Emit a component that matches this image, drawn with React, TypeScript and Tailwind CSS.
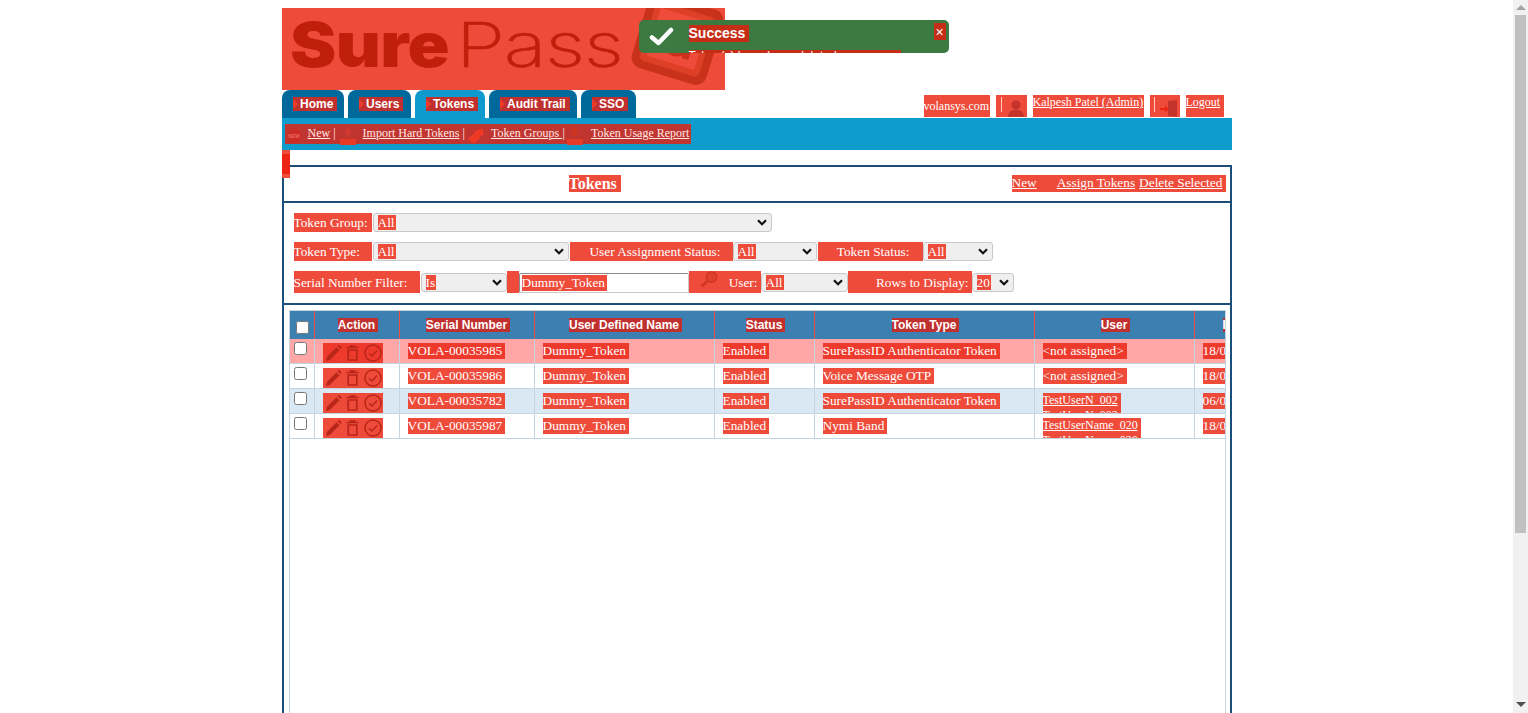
import type { ReactNode } from 'react';

const serif = 'font-["Liberation_Serif",serif]';

const tabs = [
  { name: 'Home', width: 'w-[62px]' },
  { name: 'Users', width: 'w-[63px]' },
  { name: 'Tokens', width: 'w-[70px]', active: true },
  { name: 'Audit Trail', width: 'w-[88px]' },
  { name: 'SSO', width: 'w-[55px]' },
];

const rows = [
  { serial: 'VOLA-00035985', type: 'SurePassID Authenticator Token', user: '<not assigned>', date: '18/09/2023', bg: 'bg-[#ffa6a6]', red: 'bg-[#ee3a2c]' },
  { serial: 'VOLA-00035986', type: 'Voice Message OTP', user: '<not assigned>', date: '18/09/2023', bg: 'bg-white', red: 'bg-[#ef4b3a]' },
  { serial: 'VOLA-00035782', type: 'SurePassID Authenticator Token', user: 'TestUserN_002', date: '06/09/2023', bg: 'bg-[#d9e8f3]', red: 'bg-[#ee4a3a]', link: true },
  { serial: 'VOLA-00035987', type: 'Nymi Band', user: 'TestUserName_020', date: '18/09/2023', bg: 'bg-white', red: 'bg-[#ef4b3a]', link: true },
];

const Chevron = () => (
  <svg width="10" height="7" viewBox="0 0 10 7" className="shrink-0">
    <path d="M1 1.2 5 5.2 9 1.2" fill="none" stroke="#111" strokeWidth="2.2" />
  </svg>
);

const Select = ({ value, className }: { value: string; className: string }) => (
  <div className={`flex h-[19px] items-center justify-between rounded-[3px] border border-[#c8c8c8] bg-[#efefef] pl-1 pr-[4px] ${className}`}>
    <span className="bg-[#ef4b3a] pr-[1px] leading-[15px] text-white">{value}</span>
    <Chevron />
  </div>
);

const Label = ({ children, className }: { children: ReactNode; className: string }) => (
  <div className={`flex items-center bg-[#ef4b3a] text-white ${className}`}>{children}</div>
);

const Magnifier = () => (
  <svg width="18" height="17" viewBox="0 0 18 17" className="mb-[7px] shrink-0">
    <circle cx="11.5" cy="6" r="5.2" fill="#e0402f" stroke="#cf3325" strokeWidth="1.3" />
    <path d="M7.5 10 1.5 15.5" stroke="#cf3325" strokeWidth="2.4" />
  </svg>
);

const ActionIcons = () => (
  <>
    <svg width="17" height="18" viewBox="0 0 17 18">
      <path d="M1 17 1.8 13 11.5 3.3 14.5 6.3 4.8 16Z M12.6 2.2 14 .8 16.8 3.6 15.5 5.1Z" fill="#b8261a" />
    </svg>
    <svg width="13" height="16" viewBox="0 0 13 16">
      <path d="M.5 2.5H12.5M4.5 2.5V1H8.5V2.5M2.2 5H10.8V15H2.2Z" fill="none" stroke="#b8261a" strokeWidth="1.7" />
    </svg>
    <svg width="18" height="18" viewBox="0 0 18 18">
      <circle cx="9" cy="9" r="8" fill="none" stroke="#b8261a" strokeWidth="1.5" />
      <path d="M5 9.2 8 12 13 6.5" fill="none" stroke="#b8261a" strokeWidth="1.5" />
    </svg>
  </>
);

export default function App() {
  return (
    <div className={`flex h-[713px] overflow-hidden bg-white text-[13.33px] ${serif}`}>
      <div className="min-w-0 flex-1">
        <div className="relative mx-auto w-[950px] pt-2">
          {/* logo */}
          <div className="flex h-[82px] w-[443px] items-center overflow-hidden bg-[#ef4b3a] pl-2 pb-[9px]">
            <span className="inline-block w-[158px] origin-left scale-x-[1.12] font-['Inter',sans-serif] text-[62px] font-black leading-none tracking-[-0.5px] text-[#c01f0c]">Sure</span>
            <span className="ml-2 inline-block w-[158px] origin-left scale-x-[1.28] font-['Inter',sans-serif] text-[62px] font-extralight leading-none tracking-[-1px] text-[#c01f0c] [-webkit-text-stroke:0.6px_#c01f0c]">Pass</span>
            <svg width="98" height="82" viewBox="0 0 98 82" className="-mb-[9px] ml-auto shrink-0">
              <g transform="rotate(17 50 36)" fill="none">
                <rect x="10" y="-8" width="78" height="78" rx="11" fill="#c9321a" />
                <rect x="18" y="0" width="62" height="62" rx="5" fill="#de4027" />
                <rect x="24" y="6" width="50" height="50" rx="2" fill="#ef4b3a" />
                <circle cx="49" cy="33" r="12" stroke="#c9321a" strokeWidth="7" />
                <path d="M62 20V48" stroke="#c9321a" strokeWidth="7" />
              </g>
            </svg>
          </div>

          {/* tabs and user links */}
          <div className="flex h-7 justify-between pr-2">
            <div className="flex gap-1">
              {tabs.map((tab) => (
                <div
                  key={tab.name}
                  className={`${tab.width} flex items-start rounded-t-lg pl-[11px] pt-[7px] ${tab.active ? 'bg-[#0e9acc]' : 'bg-[#00699b]'}`}
                >
                  <span className="flex h-[14px] items-center bg-[#c0302e] pr-1 font-['Liberation_Sans',sans-serif] text-xs font-bold text-white">
                    <span className="mr-[2.5px] h-0 w-0 border-y-[5px] border-l-[5px] border-y-transparent border-l-[#ef3b2a]" />
                    {tab.name}
                  </span>
                </div>
              ))}
            </div>
            <div className="mt-[5px] flex h-[22px] gap-[6px] text-xs text-white">
              <span className="flex w-[66px] items-center bg-[#ef4b3a]">volansys.com</span>
              <span className="flex w-[31px] items-end bg-[#ef4b3a] pl-[5px]">
                <span className="mt-[2px] h-[15px] w-px self-start bg-[#ffc9c2]" />
                <svg width="20" height="18" viewBox="0 0 20 18" className="ml-[4px]">
                  <circle cx="10" cy="6" r="4.5" fill="#c5342c" />
                  <path d="M2 18C2 12 6 11 10 11S18 12 18 18Z" fill="#c5342c" />
                </svg>
              </span>
              <a className="w-[111px] bg-[#ef4b3a] leading-[14px] underline">Kalpesh Patel (Admin)</a>
              <span className="flex w-[30px] items-end bg-[#ef4b3a] pl-[4px]">
                <span className="mt-[2px] h-[15px] w-px self-start bg-[#ffc9c2]" />
                <svg width="19" height="18" viewBox="0 0 19 18" className="ml-[4px]">
                  <path d="M9 2 18 1V18L9 17Z" fill="#c5342c" />
                  <path d="M1 9H6V6.5L10 10 6 13.5V11H1Z" fill="#ee2412" />
                </svg>
              </span>
              <a className="w-[38px] bg-[#ef4b3a] pl-0 leading-[14px] underline">Logout</a>
            </div>
          </div>

          {/* sub menu */}
          <div className="flex h-8 items-center bg-[#0f9bcb] pl-[3px]">
            <div className="flex h-5 w-[406px] items-center bg-[#c13530] pb-[2px] text-xs text-[#ffe9e6]">
              <svg width="16" height="16" viewBox="0 0 16 16" className="ml-[1px] mt-[5px]">
                <circle cx="8" cy="8" r="7.5" fill="#cc2c26" />
                <text x="8" y="10" textAnchor="middle" fontSize="5" fontWeight="700" fontFamily="Liberation Sans" fill="#e86a60">NEW</text>
              </svg>
              <a className="ml-[6px] underline">New</a>
              <span className="ml-[3px]">|</span>
              <svg width="18" height="18" viewBox="0 0 18 18" className="ml-[3px] mt-[5px]">
                <path d="M9 1 13 6H10.5V10H7.5V6H5Z" fill="#d23a30" />
                <rect x="1" y="12" width="16" height="6" rx="1" fill="#e83a24" />
              </svg>
              <a className="ml-[6px] underline">Import Hard Tokens</a>
              <span className="ml-[3px]">|</span>
              <svg width="18" height="18" viewBox="0 0 18 18" className="ml-[2px] mt-[5px]">
                <path d="M1 12 10 3 16 1.5 16.5 7 7 17Z" fill="#ee3a24" />
              </svg>
              <a className="ml-[6px] whitespace-pre underline">Token Groups </a>
              <span className="ml-[0.5px]">|</span>
              <svg width="18" height="18" viewBox="0 0 18 18" className="ml-[1px] mt-[5px]">
                <path d="M6.5 0H10.5V5H13L8.5 10 4 5H6.5Z" fill="#d0351f" />
                <rect x="1" y="12" width="16" height="6" rx="1" fill="#e83a24" />
              </svg>
              <a className="ml-[7px] underline">Token Usage Report</a>
            </div>
          </div>

          {/* spacer with the red marker hanging over the box */}
          <div className="relative h-[15px]">
            <div className="absolute left-0 top-0 z-10 h-7 w-2 border-y-[4px] border-[#ef4b3a] bg-[#ee2412]" />
          </div>

          {/* main box */}
          <div className="h-[560px] border-2 border-[#1c4e7a]">
            <div className="flex h-9 items-center border-b-2 border-[#1c4e7a] pb-px">
              <span className="ml-[285px] bg-[#ef4b3a] pr-1 text-base font-bold leading-[17px] text-white">Tokens</span>
              <div className="ml-auto mr-1 flex h-[17px] w-[214px] bg-[#ef4b3a] leading-[15px] text-white">
                <a className="underline">New</a>
                <a className="ml-5 underline">Assign Tokens</a>
                <a className="ml-1 underline">Delete Selected</a>
              </div>
            </div>

            <div className="flex flex-col gap-[10px] border-b-2 border-[#1c4e7a] pb-[10px] pl-[10px] pt-[10px]">
              <div className="flex">
                <Label className="h-[19px] w-[78px]">Token Group:</Label>
                <Select value="All" className="ml-px w-[399px]" />
              </div>
              <div className="flex">
                <Label className="h-[19px] w-[78px]">Token Type:</Label>
                <Select value="All" className="ml-px w-[196px]" />
                <Label className="ml-px h-[19px] w-[163px] justify-end pr-3">User Assignment Status:</Label>
                <Select value="All" className="w-[84px]" />
                <Label className="ml-px h-[19px] w-[105px] justify-end pr-[13px]">Token Status:</Label>
                <Select value="All" className="w-[70px]" />
              </div>
              <div className="flex h-[22px] items-center">
                <Label className="h-[22px] w-[126px] pt-[2px]">Serial Number Filter:</Label>
                <Select value="Is" className="ml-px w-[86px]" />
                <Label className="h-[22px] w-3">{''}</Label>
                <div className="mt-[2px] flex h-5 w-[170px] items-center rounded-[2px] border border-[#8a8a8a] border-b-[#c8c8c8] border-r-[#c8c8c8] pl-[2px]">
                  <span className="bg-[#ef4b3a] pr-[2px] leading-4 text-white">Dummy_Token</span>
                </div>
                <Label className="h-[22px] w-[72px] justify-between pl-[11px] pr-[3px] pt-[2px]">
                  <Magnifier />
                  <span>User:</span>
                </Label>
                <Select value="All" className="w-[87px]" />
                <Label className="h-[22px] w-[124px] justify-end pr-[3px] pt-[2px]">Rows to Display:</Label>
                <Select value="20" className="w-[42px]" />
              </div>
            </div>

            {/* table */}
            <div className="ml-[5px] mr-1 mt-[5px] h-[420px] overflow-hidden border border-[#c4d4e0]">
              <div className="grid w-[1100px] grid-cols-[25px_85px_135px_180px_100px_220px_160px_195px]">
                <div className="flex h-7 items-center border-r border-[#ef4b3a] bg-[#3c80b2] pl-[6px] pt-[4px]">
                  <input type="checkbox" />
                </div>
                {['Action', 'Serial Number', 'User Defined Name', 'Status', 'Token Type', 'User'].map((title) => (
                  <div key={title} className="flex h-7 items-start justify-center border-r border-[#ef4b3a] bg-[#3c80b2] pt-[7px]">
                    <span className="ml-[3px] bg-[#c0302e] pr-[3px] font-['Liberation_Sans',sans-serif] text-xs font-bold leading-[14px] text-white">{title}</span>
                  </div>
                ))}
                <div className="flex h-7 items-start bg-[#3c80b2] pl-[28px] pt-[7px]">
                  <span className="bg-[#c0302e] pr-[3px] font-['Liberation_Sans',sans-serif] text-xs font-bold leading-[14px] text-white">Date Created</span>
                </div>
                {rows.map((row) => (
                  <div key={row.serial} className="contents">
                    <div className={`h-[25px] border-b border-r border-[#c4d4e0] pl-1 pt-[3px] ${row.bg}`}>
                      <input type="checkbox" className="block" />
                    </div>
                    <div className={`h-[25px] border-b border-r border-[#c4d4e0] pl-2 pt-1 ${row.bg}`}>
                      <div className={`flex h-5 w-[60px] items-center justify-between pl-[2px] pr-[1px] ${row.red}`}>
                        <ActionIcons />
                      </div>
                    </div>
                    {[row.serial, 'Dummy_Token', 'Enabled', row.type].map((text) => (
                      <div key={text} className={`h-[25px] border-b border-r border-[#c4d4e0] pl-2 pt-1 ${row.bg}`}>
                        <span className={`block h-4 w-fit pr-[3px] leading-[15px] text-white ${row.red}`}>{text}</span>
                      </div>
                    ))}
                    <div className={`h-[25px] overflow-hidden border-b border-r border-[#c4d4e0] pl-2 pt-1 ${row.bg}`}>
                      {row.link ? (
                        <div className={`w-fit pr-[3px] text-xs leading-[15px] text-white ${row.red}`}>
                          <a className="block underline">{row.user}</a>
                          <a className="block underline">{row.user}</a>
                        </div>
                      ) : (
                        <span className={`block h-4 w-fit pr-[3px] leading-[15px] text-white ${row.red}`}>{row.user}</span>
                      )}
                    </div>
                    <div className={`h-[25px] border-b border-[#c4d4e0] pl-2 pt-1 ${row.bg}`}>
                      <span className={`block h-4 w-fit pr-[3px] leading-[15px] text-white ${row.red}`}>{row.date}</span>
                    </div>
                  </div>
                ))}
              </div>
            </div>
          </div>

          {/* toast */}
          <div className="absolute left-[357px] top-5 flex h-[33px] w-[310px] overflow-hidden rounded-[5px] bg-[#3d7a42] font-['Liberation_Sans',sans-serif] text-white">
            <div className="flex w-[50px] shrink-0 items-center justify-center pr-[4px]">
              <svg width="25" height="19" viewBox="0 0 25 19">
                <path d="M3 10.5 9.5 16 22 3" fill="none" stroke="white" strokeWidth="4.5" strokeLinecap="round" strokeLinejoin="round" />
              </svg>
            </div>
            <div className="w-[212px] pt-[5px]">
              <div className="w-fit bg-[#c62d16] pr-[4px] text-sm font-bold leading-[17px]">Success</div>
              <div className="mt-[8px] bg-[#c62d16] text-xs leading-[12px]">Token(s) have been deleted successfully</div>
            </div>
            <div className="ml-auto mr-[3px] mt-[3px] flex h-[17px] w-3 items-center justify-center bg-[#c62d16] text-sm leading-none">×</div>
          </div>
        </div>
      </div>

      {/* page scrollbar */}
      <div className="flex w-[15px] shrink-0 flex-col items-center bg-[#f1f1f1] px-[2px]">
        <div className="mt-[5px] h-0 w-0 border-x-[5px] border-b-[5px] border-x-transparent border-b-[#a3a3a3]" />
        <div className="mt-[5px] h-[518px] w-[11px] bg-[#c1c1c1]" />
        <div className="mb-[6px] mt-auto h-0 w-0 border-x-[5px] border-t-[5px] border-x-transparent border-t-[#505050]" />
      </div>
    </div>
  );
}
